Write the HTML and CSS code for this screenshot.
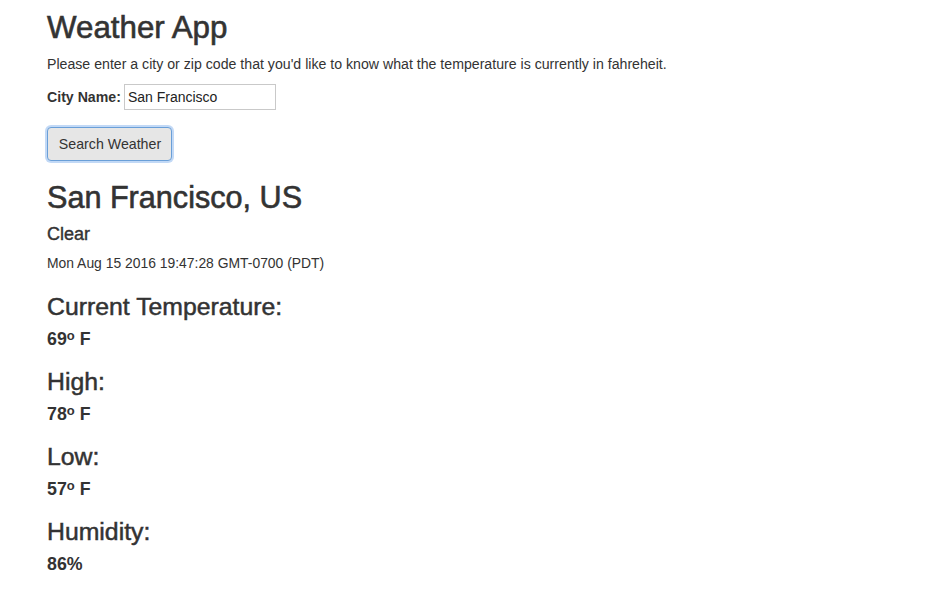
FILE: index.html
```html
<!DOCTYPE html>
<html lang="en">
<head>
<meta charset="utf-8">
<title>Weather App</title>
<link rel="stylesheet" href="styles.css">
</head>
<body>
<div class="container">
  <h1 class="title">Weather App</h1>
  <p class="intro">Please enter a city or zip code that you'd like to know what the temperature is currently in fahreheit.</p>
  <form class="search-form">
    <div class="field">
      <label class="field-label" for="city">City Name:</label>
      <input class="field-input" id="city" type="text" value="San Francisco">
    </div>
    <button class="search-btn" type="button">Search Weather</button>
  </form>
  <section class="result">
    <h2 class="city">San Francisco, US</h2>
    <h4 class="condition">Clear</h4>
    <p class="date">Mon Aug 15 2016 19:47:28 GMT-0700 (PDT)</p>
    <h3 class="stat-label">Current Temperature:</h3>
    <h4 class="stat-value">69<sup>o</sup> F</h4>
    <h3 class="stat-label">High:</h3>
    <h4 class="stat-value">78<sup>o</sup> F</h4>
    <h3 class="stat-label">Low:</h3>
    <h4 class="stat-value">57<sup>o</sup> F</h4>
    <h3 class="stat-label">Humidity:</h3>
    <h4 class="stat-value">86%</h4>
  </section>
</div>
</body>
</html>
```
FILE: styles.css
```css
html, body {
  margin: 0;
  padding: 0;
  background: #fff;
}
body {
  font-family: "Liberation Sans", Arial, Helvetica, sans-serif;
  font-size: 14.15px;
  line-height: 20px;
  color: #333;
}
.container {
  padding: 0 0 0 47px;
}
.title {
  font-size: 31.3px;
  font-weight: 500;
  line-height: 33px;
  margin: 11px 0 10px;
  -webkit-text-stroke: 0.6px #333;
}
.intro {
  margin: 0 0 10px;
}
.search-form {
  margin: 0;
}
.field {
  display: flex;
  align-items: center;
  margin: 0 0 17px;
}
.field-label {
  font-weight: bold;
  margin-right: 3px;
}
.field-input {
  box-sizing: border-box;
  width: 152px;
  height: 26px;
  margin: 0;
  padding: 2px 3px;
  border: 1px solid #c9c9c9;
  border-radius: 0;
  font-family: inherit;
  font-size: 14px;
  color: #222;
  outline: none;
}
.search-btn {
  box-sizing: border-box;
  display: block;
  width: 125px;
  height: 34px;
  padding: 0 0 0 1px;
  border: 1px solid #6a9fd8;
  border-radius: 4px;
  background: #e6e6e6;
  box-shadow: 0 0 0 2px rgba(120, 170, 235, 0.45);
  font-family: inherit;
  font-size: 14.2px;
  white-space: nowrap;
  color: #333;
  cursor: pointer;
}
.result {
  margin-top: 20px;
}
.city {
  font-size: 30.6px;
  font-weight: 500;
  line-height: 33px;
  margin: 0 0 10px;
  -webkit-text-stroke: 0.6px #333;
}
.condition {
  font-size: 18px;
  font-weight: 500;
  line-height: 20px;
  margin: 0 0 9px;
  -webkit-text-stroke: 0.4px #333;
}
.date {
  margin: 0;
  padding-bottom: 1px;
  font-size: 13.9px;
}
.stat-label {
  font-size: 24.8px;
  font-weight: 500;
  line-height: 26px;
  margin: 20px 0 0;
  -webkit-text-stroke: 0.5px #333;
}
.stat-value {
  font-size: 17.8px;
  font-weight: bold;
  line-height: 20px;
  margin: 9px 0 0;
}
.stat-value sup {
  font-size: 13px;
  line-height: 0;
  vertical-align: 5px;
}
```
